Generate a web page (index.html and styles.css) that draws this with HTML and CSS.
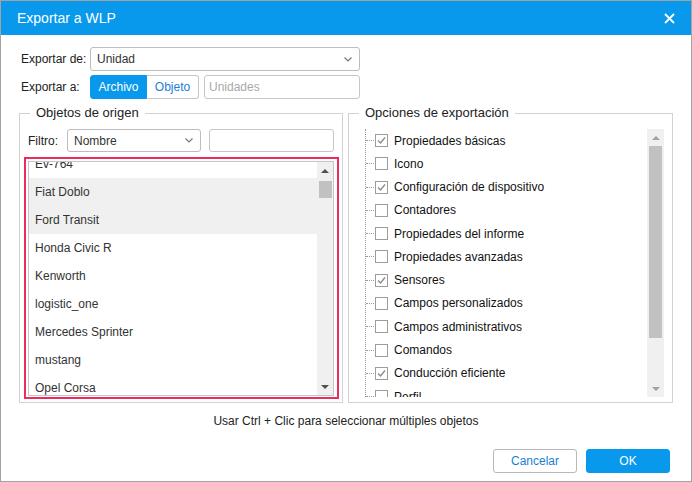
FILE: index.html
```html
<!DOCTYPE html>
<html lang="es">
<head>
<meta charset="utf-8">
<title>Exportar a WLP</title>
<link rel="stylesheet" href="styles.css">
</head>
<body>
<div class="dialog">
  <div class="header">
    <span class="title">Exportar a WLP</span>
    <svg class="close" width="11" height="11" viewBox="0 0 11 11"><path d="M1 1L10 10M10 1L1 10" stroke="#fff" stroke-width="1.8" fill="none"/></svg>
  </div>
  <div class="body">
    <div class="row">
      <span class="label">Exportar de:</span>
      <div class="select wide"><span>Unidad</span><svg class="chev" width="8" height="5" viewBox="0 0 8 5"><path d="M0.5 0.5L4 4L7.5 0.5" stroke="#777" stroke-width="1.2" fill="none"/></svg></div>
    </div>
    <div class="row">
      <span class="label">Exportar a:</span>
      <div class="seg">
        <span class="seg-btn active">Archivo</span>
        <span class="seg-btn">Objeto</span>
      </div>
      <div class="input units">Unidades</div>
    </div>
    <div class="panels">
      <fieldset class="panel left">
        <legend>Objetos de origen</legend>
        <div class="left-inner">
          <div class="filter">
            <span class="filter-label">Filtro:</span>
            <div class="select small"><span>Nombre</span><svg class="chev" width="8" height="5" viewBox="0 0 8 5"><path d="M0.5 0.5L4 4L7.5 0.5" stroke="#777" stroke-width="1.2" fill="none"/></svg></div>
            <div class="input search"></div>
          </div>
          <div class="highlight">
            <div class="list">
              <div class="items">
                <div class="item first">Ev-764</div>
                <div class="item sel">Fiat Doblo</div>
                <div class="item sel">Ford Transit</div>
                <div class="item">Honda Civic R</div>
                <div class="item">Kenworth</div>
                <div class="item">logistic_one</div>
                <div class="item">Mercedes Sprinter</div>
                <div class="item">mustang</div>
                <div class="item">Opel Corsa</div>
              </div>
              <div class="scroll dark">
                <div class="arrow"><span class="tri up"></span></div>
                <div class="thumb t-left"></div>
                <div class="spacer"></div>
                <div class="arrow"><span class="tri down"></span></div>
              </div>
            </div>
          </div>
        </div>
      </fieldset>
      <fieldset class="panel right">
        <legend>Opciones de exportación</legend>
        <div class="right-inner">
          <div class="tree">
            <div class="tree-list">
              <ul class="nodes">
                <li class="node"><span class="stub"></span><span class="cb on"><svg width="11" height="11" viewBox="0 0 11 11"><path d="M2 5.5L4.5 8L9 2.5" stroke="#8c8c8c" stroke-width="1.4" fill="none"/></svg></span><span class="nl">Propiedades básicas</span></li>
                <li class="node"><span class="stub"></span><span class="cb"></span><span class="nl">Icono</span></li>
                <li class="node"><span class="stub"></span><span class="cb on"><svg width="11" height="11" viewBox="0 0 11 11"><path d="M2 5.5L4.5 8L9 2.5" stroke="#8c8c8c" stroke-width="1.4" fill="none"/></svg></span><span class="nl">Configuración de dispositivo</span></li>
                <li class="node"><span class="stub"></span><span class="cb"></span><span class="nl">Contadores</span></li>
                <li class="node"><span class="stub"></span><span class="cb"></span><span class="nl">Propiedades del informe</span></li>
                <li class="node"><span class="stub"></span><span class="cb"></span><span class="nl">Propiedades avanzadas</span></li>
                <li class="node"><span class="stub"></span><span class="cb on"><svg width="11" height="11" viewBox="0 0 11 11"><path d="M2 5.5L4.5 8L9 2.5" stroke="#8c8c8c" stroke-width="1.4" fill="none"/></svg></span><span class="nl">Sensores</span></li>
                <li class="node"><span class="stub"></span><span class="cb"></span><span class="nl">Campos personalizados</span></li>
                <li class="node"><span class="stub"></span><span class="cb"></span><span class="nl">Campos administrativos</span></li>
                <li class="node"><span class="stub"></span><span class="cb"></span><span class="nl">Comandos</span></li>
                <li class="node"><span class="stub"></span><span class="cb on"><svg width="11" height="11" viewBox="0 0 11 11"><path d="M2 5.5L4.5 8L9 2.5" stroke="#8c8c8c" stroke-width="1.4" fill="none"/></svg></span><span class="nl">Conducción eficiente</span></li>
                <li class="node"><span class="stub"></span><span class="cb"></span><span class="nl">Perfil</span></li>
              </ul>
            </div>
            <div class="scroll light wide-scroll">
              <div class="arrow"><span class="tri up"></span></div>
              <div class="thumb t-right"></div>
              <div class="spacer"></div>
              <div class="arrow"><span class="tri down"></span></div>
            </div>
          </div>
        </div>
      </fieldset>
    </div>
    <div class="hint">Usar Ctrl + Clic para seleccionar múltiples objetos</div>
    <div class="footer">
      <span class="btn cancel">Cancelar</span>
      <span class="btn ok">OK</span>
    </div>
  </div>
</div>
</body>
</html>
```
FILE: styles.css
```css
html, body {
  margin: 0;
  padding: 0;
  background: #ffffff;
}
.dialog {
  width: 692px;
  height: 482px;
  box-sizing: border-box;
  border: 1px solid #a3a3a3;
  background: #fff;
  font-family: "Liberation Sans", Arial, sans-serif;
  font-size: 12px;
  color: #222;
  overflow: hidden;
}
.header {
  height: 34px;
  background: #0899ec;
  display: flex;
  align-items: center;
  justify-content: space-between;
  padding: 0 16px 0 16px;
}
.title {
  color: #fff;
  font-size: 14px;
}
.close {
  display: block;
  margin-top: 1px;
}
.body {
  padding: 12px 18px 0 18px;
}
.row {
  display: flex;
  align-items: center;
  height: 24px;
  padding-left: 2px;
}
.row + .row {
  margin-top: 4px;
}
.label {
  width: 69px;
  color: #222;
}
.select {
  height: 24px;
  box-sizing: border-box;
  border: 1px solid #bdbdbd;
  border-radius: 3px;
  display: flex;
  align-items: center;
  justify-content: space-between;
  padding: 0 7px 0 6px;
  color: #333;
  background: #fff;
}
.select.wide {
  width: 270px;
}
.chev {
  display: block;
}
.seg {
  display: flex;
  height: 24px;
}
.seg-btn {
  box-sizing: border-box;
  height: 24px;
  display: flex;
  align-items: center;
  justify-content: center;
  width: 52px;
  border: 1px solid #c6c6c6;
  border-left: none;
  border-radius: 0 3px 3px 0;
  color: #1a7fd4;
}
.seg-btn.active {
  width: 57px;
  background: #0899ec;
  border: 1px solid #0899ec;
  border-radius: 3px 0 0 3px;
  color: #fff;
}
.input {
  box-sizing: border-box;
  height: 24px;
  border: 1px solid #c6c6c6;
  border-radius: 3px;
  display: flex;
  align-items: center;
  padding-left: 4px;
  background: #fff;
}
.units {
  width: 156px;
  margin-left: 5px;
  color: #a9a9a9;
}
.panels {
  display: flex;
  gap: 5px;
  margin-top: 6px;
}
.panel {
  margin: 0;
  padding: 0;
  border: 1px solid #d2d2d2;
  box-sizing: border-box;
  min-width: 0;
}
.panel.left {
  width: 324px;
}
.panel.right {
  width: 325px;
}
.panel legend {
  font-size: 13px;
  line-height: 16px;
  padding: 0 6px;
  margin-left: 10px;
  color: #222;
}
.left-inner {
  padding: 8px 3px 3px 4px;
}
.filter {
  display: flex;
  align-items: center;
  height: 23px;
  padding-left: 4px;
}
.filter-label {
  width: 39px;
}
.select.small {
  width: 134px;
  height: 23px;
  padding-right: 7px;
}
.search {
  width: 125px;
  height: 23px;
  margin-left: 8px;
}
.highlight {
  margin-top: 5px;
  border: 2px solid #ef2b5d;
  padding: 2px 3px 1px 2px;
}
.list {
  height: 235px;
  box-sizing: border-box;
  border: 1px solid #c6c6c6;
  display: flex;
  overflow: hidden;
}
.items {
  flex: 1;
  overflow: hidden;
}
.item {
  height: 28px;
  line-height: 28px;
  padding-left: 6px;
  color: #333;
}
.item.first {
  margin-top: -12px;
}
.item.sel {
  background: #f0f0f0;
}
.scroll {
  width: 16px;
  background: #f0f0f0;
  display: flex;
  flex-direction: column;
}
.scroll.wide-scroll {
  width: 17px;
}
.arrow {
  height: 17px;
  display: flex;
  align-items: center;
  justify-content: center;
}
.tri {
  width: 0;
  height: 0;
  border-left: 4px solid transparent;
  border-right: 4px solid transparent;
}
.dark .tri.up { border-bottom: 4px solid #505050; }
.dark .tri.down { border-top: 4px solid #505050; }
.light .tri.up { border-bottom: 4px solid #a3a3a3; }
.light .tri.down { border-top: 4px solid #a3a3a3; }
.thumb {
  background: #c1c1c1;
  margin-left: 2px;
  width: 13px;
}
.t-left {
  margin-top: 2px;
  height: 17px;
}
.t-right {
  height: 192px;
}
.spacer {
  flex: 1;
}
.right-inner {
  padding: 8px 8px 5px 8px;
}
.tree {
  height: 268px;
  display: flex;
}
.tree-list {
  flex: 1;
  overflow: hidden;
  padding-left: 8px;
}
.nodes {
  list-style: none;
  margin: 0;
  padding: 0;
  border-left: 1px dotted #9a9a9a;
  height: 100%;
  box-sizing: border-box;
}
.node {
  height: 23.27px;
  display: flex;
  align-items: center;
}
.stub {
  width: 8px;
  border-top: 1px dotted #9a9a9a;
}
.cb {
  width: 13px;
  height: 13px;
  box-sizing: border-box;
  border: 1px solid #9c9c9c;
  background: #fff;
  margin-left: 1px;
  display: flex;
  align-items: center;
  justify-content: center;
}
.cb svg {
  display: block;
}
.nl {
  margin-left: 6px;
  color: #111;
  white-space: nowrap;
}
.hint {
  margin-top: 11px;
  line-height: 14px;
  text-align: center;
  color: #222;
}
.footer {
  display: flex;
  justify-content: flex-end;
  gap: 9px;
  margin-top: 21px;
  padding-right: 3px;
}
.btn {
  width: 84px;
  height: 24px;
  box-sizing: border-box;
  border-radius: 3px;
  display: flex;
  align-items: center;
  justify-content: center;
}
.btn.cancel {
  border: 1px solid #b8b8b8;
  color: #1a7fd4;
  background: #fff;
}
.btn.ok {
  background: #0899ec;
  border: 1px solid #0899ec;
  color: #fff;
}
```
